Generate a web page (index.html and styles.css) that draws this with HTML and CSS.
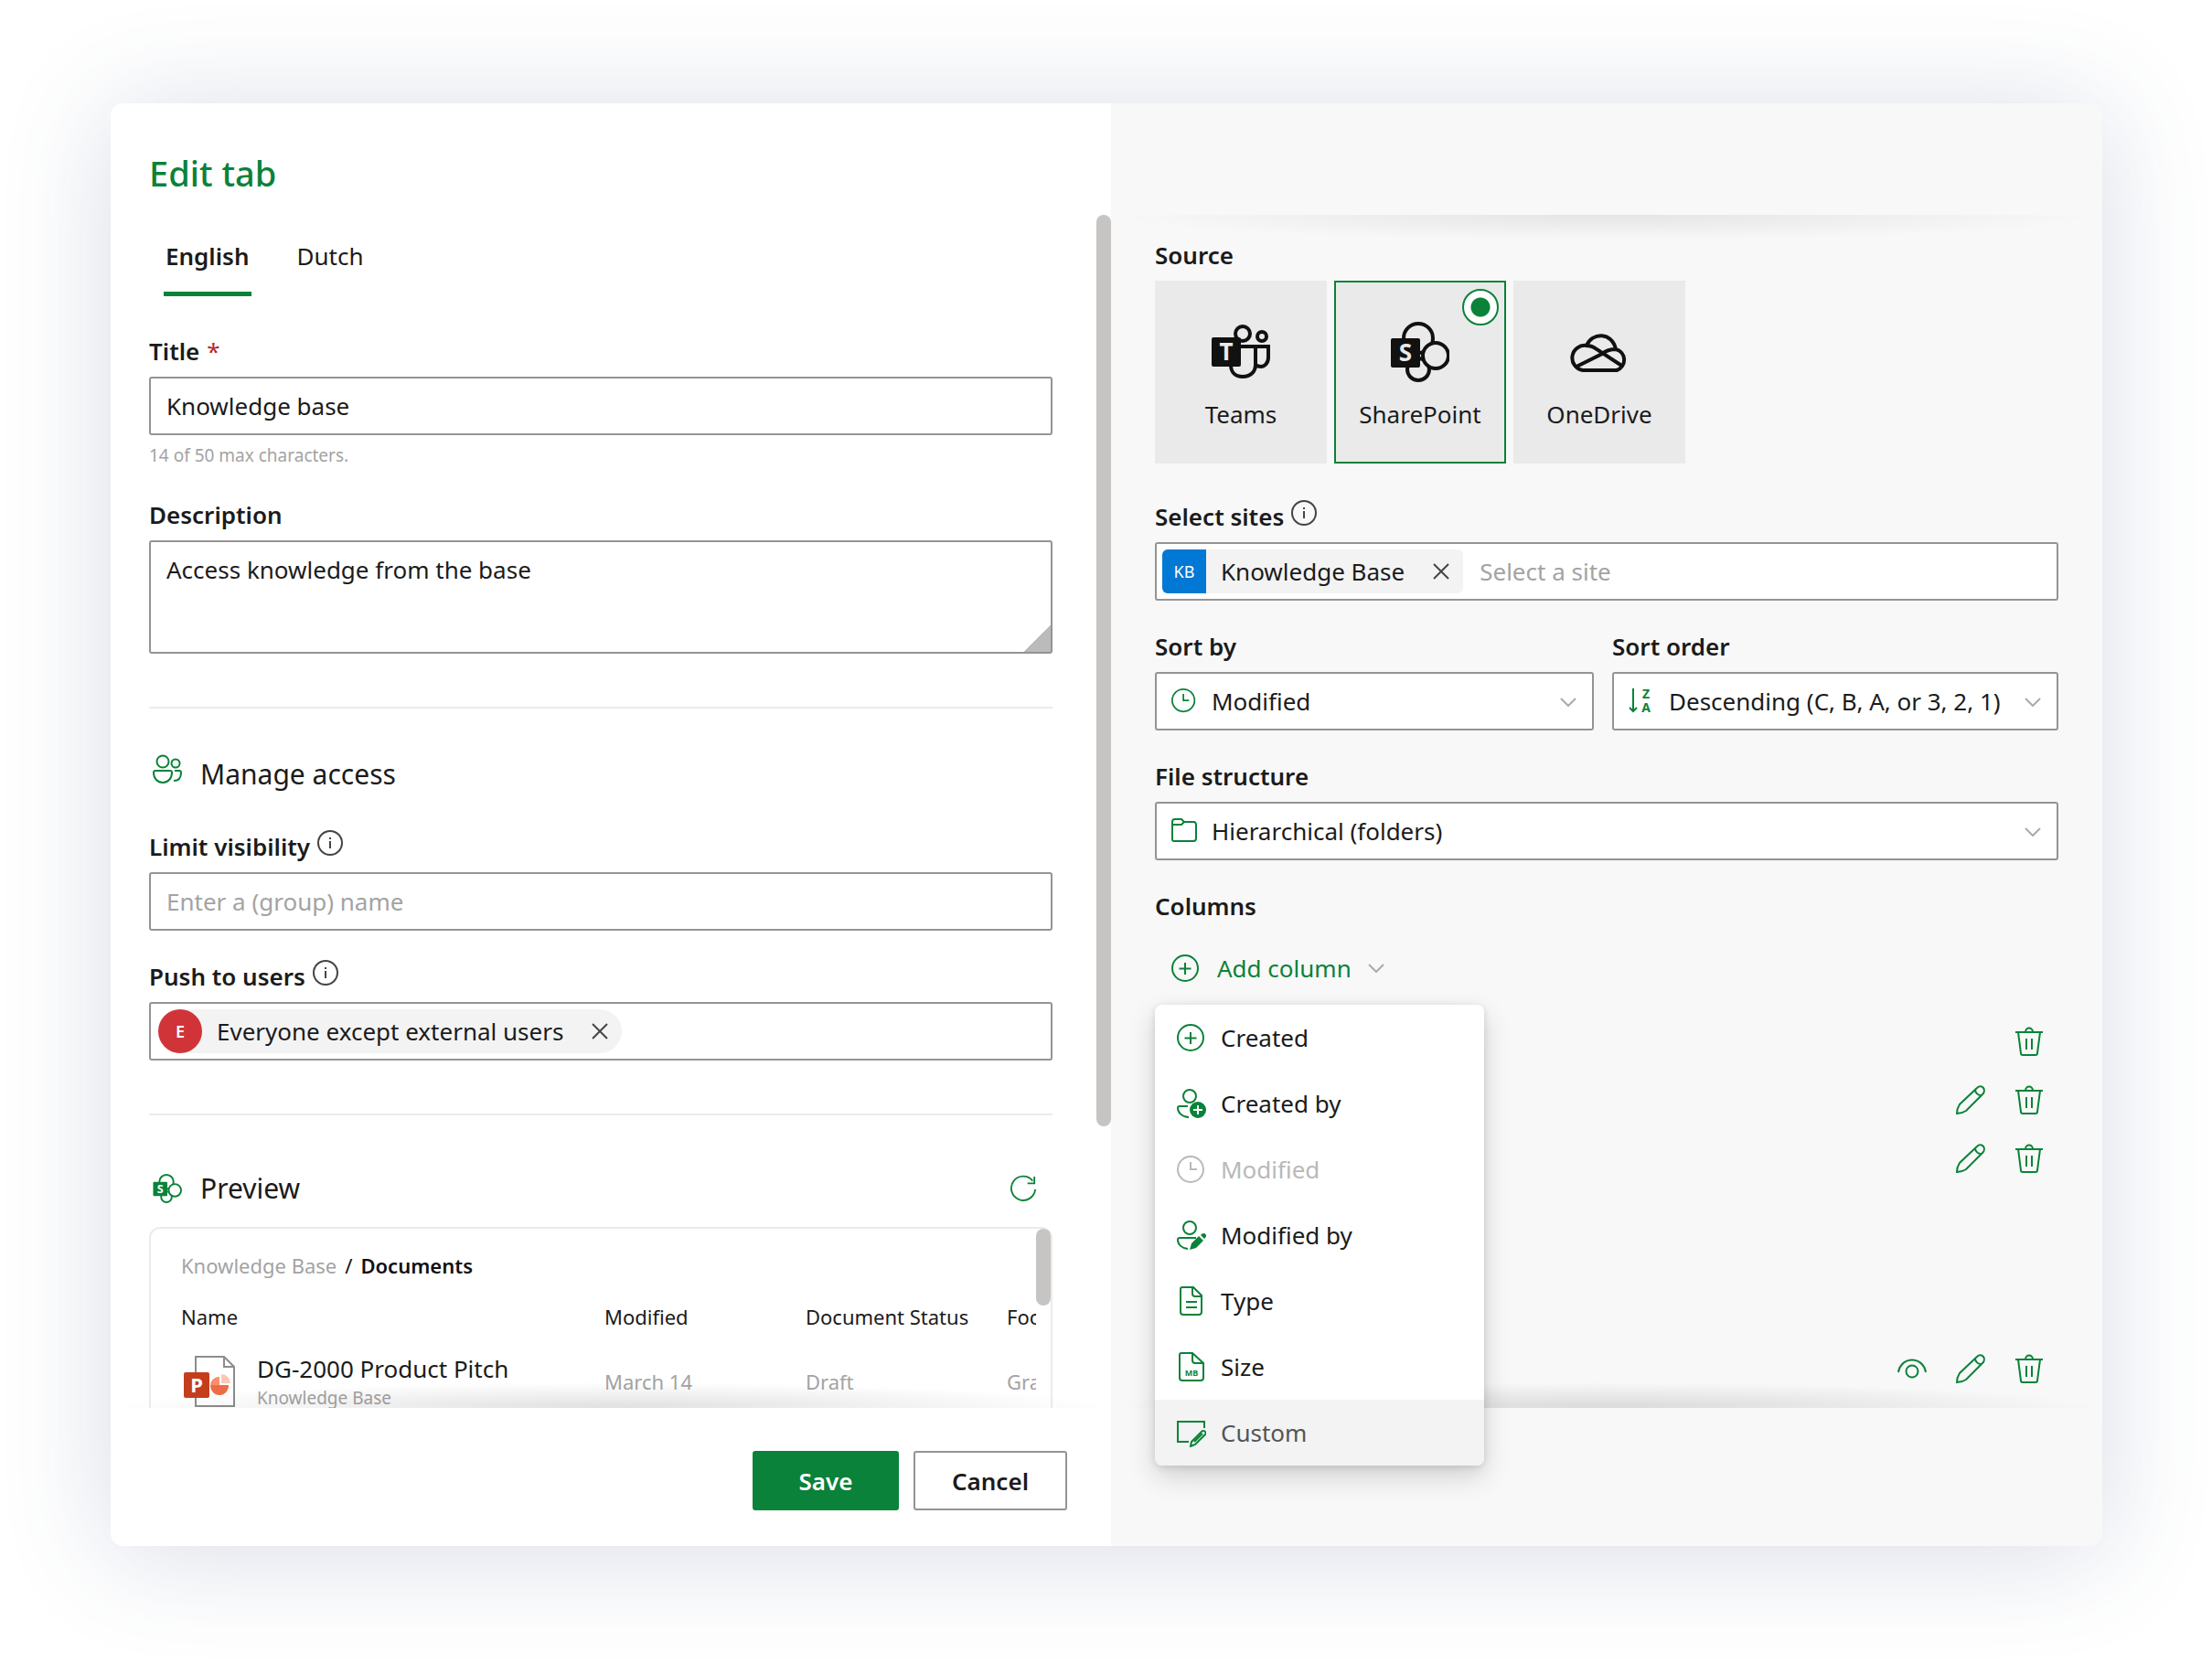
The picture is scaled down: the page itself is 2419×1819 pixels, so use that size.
FILE: index.html
```html
<!DOCTYPE html>
<html lang="en">
<head>
<meta charset="utf-8">
<meta name="viewport" content="width=device-width, initial-scale=1">
<title>Edit tab</title>
<link rel="stylesheet" href="styles.css">
</head>
<body>
<svg class="sprite" aria-hidden="true">
  <symbol id="i-info" viewBox="0 0 28 28"><circle cx="14" cy="14" r="13" /><path d="M14 12v8M14 8v2" /></symbol>
  <symbol id="i-close" viewBox="0 0 18 18"><path d="M1 1l16 16M17 1L1 17" /></symbol>
  <symbol id="i-chevron" viewBox="0 0 18 10"><path d="M1 1l8 8 8-8" /></symbol>
  <symbol id="i-plus" viewBox="0 0 32 32"><circle cx="15" cy="16" r="14" /><path d="M15 10v13M8.500 16.500h13" /></symbol>
  <symbol id="i-clock" viewBox="0 0 32 32"><circle cx="15" cy="16" r="14" /><path d="M15 8v8h7" /></symbol>
  <symbol id="i-people" viewBox="0 0 32 32"><circle cx="11" cy="8" r="6.500" /><circle cx="25" cy="10" r="4.500" /><path d="M3 18h16a2 2 0 0 1 2 2c0 6-4 11-10 11S1 26 1 20a2 2 0 0 1 2-2zM24 18h5a2 2 0 0 1 2 2c0 6-3 9-8 9" /></symbol>
  <symbol id="i-user-add" viewBox="0 0 32 32"><circle cx="14" cy="8" r="7" /><path d="M12 19H3a2 2 0 0 0-2 2c0 5 5 10 12 10" /><circle class="solid" cx="23" cy="23" r="9" /><path class="knock" d="M23 18v10M18 23h10" /></symbol>
  <symbol id="i-user-edit" viewBox="0 0 32 32"><circle cx="14" cy="8" r="7" /><path d="M21 19H3a2 2 0 0 0-2 2c0 5 4 9 11 10" /><path class="solid" d="M24 17l5 5-8 8-7 2 2-7zM27 15c3-3 7 1 4 4l-1 1-4-4z" /></symbol>
  <symbol id="i-doc" viewBox="0 0 32 32"><path d="M6 1h12l9 9v18a3 3 0 0 1-3 3H7a3 3 0 0 1-3-3V3a2 2 0 0 1 2-2zM17 1v7a3 3 0 0 0 3 3h7M10 17h12M10 23h12" /></symbol>
  <symbol id="i-size" viewBox="0 0 32 32"><path d="M5 1h12l12 11v16a3 3 0 0 1-3 3H6a3 3 0 0 1-3-3V3a2 2 0 0 1 2-2zM17 1v8a3 3 0 0 0 3 3h9" /><text x="16" y="26" font-size="9">MB</text></symbol>
  <symbol id="i-custom" viewBox="0 0 32 32"><path d="M30 11V4H1v22h12M29 14a2.500 2.500 0 0 1 2 4L20 29l-5 2 1-5 11-11a2 2 0 0 1 2-1zM19 26l9-9" /></symbol>
  <symbol id="i-trash" viewBox="0 0 32 32"><path d="M1 6h30M12 6c0-6 8-6 8 0M4 6l3 23a2 2 0 0 0 2 2h14a2 2 0 0 0 2-2l3-23M13 13v12M19 13v12" /></symbol>
  <symbol id="i-pencil" viewBox="0 0 32 32"><path d="M23 3c5-5 11 2 6 7L11 28c-3 2-6 3-10 3 0-4 1-7 3-10zM21 5c0 3 3 6 6 6" /></symbol>
  <symbol id="i-eye" viewBox="0 0 32 32"><path d="M1 20C4 2 28 2 31 20" /><circle cx="16" cy="19" r="6.500" /></symbol>
  <symbol id="i-refresh" viewBox="0 0 32 32"><path d="M30 17A14 14 0 1 1 27 7M29 2v8h-8" /></symbol>
  <symbol id="i-folder" viewBox="0 0 28 28"><path d="M1 5a3 3 0 0 1 3-3h7l3 3h11a3 3 0 0 1 2 3v15a3 3 0 0 1-3 3H3a2 2 0 0 1-2-2zM1 8h10l3-3" /></symbol>
  <symbol id="i-sort" viewBox="0 0 28 28"><path d="M5 1v25M1 22l4 4 4-4" /><text x="19" y="12" font-size="14">Z</text><text x="19" y="27" font-size="14">A</text></symbol>
  <symbol id="i-teams" viewBox="0 0 64 64"><circle cx="34" cy="12" r="8" /><circle cx="55" cy="15" r="5" /><path d="M30 26h32v12c0 6-4 10-8 10-3 0-5-1-6-2M48 26v20c0 8-6 13-14 13s-13-5-13-13" /><rect class="solid box" x="0" y="16" width="32" height="32" rx="2" /><text class="mark" x="16" y="41" font-size="26">T</text></symbol>
  <symbol id="i-sharepoint" viewBox="0 0 64 66"><circle cx="30" cy="52" r="12" /><circle cx="30" cy="18" r="16" /><circle cx="49" cy="37" r="14" /><rect class="solid box" x="0" y="18" width="32" height="32" rx="2" /><text class="mark" x="16" y="43" font-size="26">S</text></symbol>
  <symbol id="i-onedrive" viewBox="0 0 64 64"><path d="M14 52a13 13 0 1 1 4-27C24 10 46 10 50 29a12 12 0 0 1 1 23zM18 25q6 0 11 4l29 19M7 48l28-14q6-5 15-5" /></symbol>
  <symbol id="i-ppt" viewBox="0 0 56 56"><path class="page" d="M13 1h31l11 11v43H13zM44 1v11h11" /><rect x="0" y="18" width="28" height="28" rx="2" fill="#c43e1c" /><path d="M39 23a10 10 0 1 0 10 9H39z" fill="#ed6c47" /><path d="M39 23a10 10 0 0 0-9 9h9z" fill="#ff8f6b" /><path d="M41 20a10 10 0 0 1 10 10H41z" fill="#ffc7b5" /><text class="mark" x="14" y="40" font-size="22">P</text></symbol>
</svg>

<main class="dialog">
  <section class="panel">
    <header class="panel-head"><h1>Edit tab</h1></header>

    <div class="panel-body clipped">
      <div class="tabs" role="tablist">
        <button class="tab active" role="tab" aria-selected="true">English</button>
        <button class="tab" role="tab" aria-selected="false">Dutch</button>
      </div>

      <div class="field">
        <label class="label" for="title">Title <span class="required">*</span></label>
        <input class="control" id="title" type="text" value="Knowledge base">
        <p class="help">14 of 50 max characters.</p>
      </div>

      <div class="field">
        <label class="label" for="description">Description</label>
        <textarea class="control area" id="description">Access knowledge from the base</textarea>
      </div>

      <hr>

      <h2 class="section-title"><svg class="icon"><use href="#i-people" /></svg>Manage access</h2>

      <div class="field">
        <label class="label" for="visibility">Limit visibility <svg class="icon info"><use href="#i-info" /></svg></label>
        <input class="control" id="visibility" type="text" placeholder="Enter a (group) name">
      </div>

      <div class="field">
        <label class="label" for="push">Push to users <svg class="icon info"><use href="#i-info" /></svg></label>
        <div class="control picker">
          <span class="chip person"><span class="avatar">E</span>Everyone except external users<button class="remove" aria-label="Remove"><svg class="icon close"><use href="#i-close" /></svg></button></span>
          <input class="bare" id="push" type="text">
        </div>
      </div>

      <hr>

      <div class="preview-head">
        <h2 class="section-title"><svg class="icon"><use href="#i-sharepoint" /></svg>Preview</h2>
        <button class="icon-button" aria-label="Refresh"><svg class="icon small"><use href="#i-refresh" /></svg></button>
      </div>

      <div class="preview">
        <div class="preview-scroll">
          <nav class="crumbs"><a href="#">Knowledge Base</a><span>/</span><strong>Documents</strong></nav>
          <table class="files">
            <colgroup><col class="col-name"><col><col><col></colgroup>
            <thead><tr><th>Name</th><th>Modified</th><th>Document Status</th><th>Footer</th></tr></thead>
            <tbody>
              <tr>
                <td><div class="file"><svg class="file-icon"><use href="#i-ppt" /></svg><div><div class="file-name">DG-2000 Product Pitch</div><div class="file-site">Knowledge Base</div></div></div></td>
                <td>March 14</td><td>Draft</td><td>Grand</td>
              </tr>
            </tbody>
          </table>
        </div>
      </div>
    </div>

    <footer class="panel-foot">
      <button class="button primary">Save</button>
      <button class="button">Cancel</button>
    </footer>
  </section>

  <section class="panel source">
    <div class="panel-head"></div>

    <div class="panel-body">
      <fieldset class="tiles-field">
        <legend class="label">Source</legend>
        <div class="tiles">
          <label class="tile"><input type="radio" name="source"><svg class="tile-icon"><use href="#i-teams" /></svg>Teams</label>
          <label class="tile"><input type="radio" name="source" checked><svg class="tile-icon"><use href="#i-sharepoint" /></svg>SharePoint</label>
          <label class="tile"><input type="radio" name="source"><svg class="tile-icon"><use href="#i-onedrive" /></svg>OneDrive</label>
        </div>
      </fieldset>

      <div class="field">
        <label class="label" for="sites">Select sites <svg class="icon info"><use href="#i-info" /></svg></label>
        <div class="control picker">
          <span class="chip"><span class="avatar">KB</span>Knowledge Base<button class="remove" aria-label="Remove"><svg class="icon close"><use href="#i-close" /></svg></button></span>
          <input class="bare" id="sites" type="text" placeholder="Select a site">
        </div>
      </div>

      <div class="sort-row">
        <div class="field">
          <label class="label" for="sort-by">Sort by</label>
          <div class="select"><svg class="icon lead"><use href="#i-clock" /></svg><select class="control" id="sort-by"><option>Modified</option></select><svg class="icon chevron"><use href="#i-chevron" /></svg></div>
        </div>
        <div class="field">
          <label class="label" for="sort-order">Sort order</label>
          <div class="select"><svg class="icon lead"><use href="#i-sort" /></svg><select class="control" id="sort-order"><option>Descending (C, B, A, or 3, 2, 1)</option></select><svg class="icon chevron"><use href="#i-chevron" /></svg></div>
        </div>
      </div>

      <div class="field">
        <label class="label" for="structure">File structure</label>
        <div class="select"><svg class="icon lead"><use href="#i-folder" /></svg><select class="control" id="structure"><option>Hierarchical (folders)</option></select><svg class="icon chevron"><use href="#i-chevron" /></svg></div>
      </div>

      <h3 class="label columns-title">Columns</h3>
      <div class="add">
        <button class="add-button" aria-expanded="true"><svg class="icon"><use href="#i-plus" /></svg>Add column<svg class="icon chevron-inline"><use href="#i-chevron" /></svg></button>
        <div class="menu" role="menu">
          <button role="menuitem"><svg class="icon"><use href="#i-plus" /></svg>Created</button>
          <button role="menuitem"><svg class="icon"><use href="#i-user-add" /></svg>Created by</button>
          <button role="menuitem" disabled><svg class="icon"><use href="#i-clock" /></svg>Modified</button>
          <button role="menuitem"><svg class="icon"><use href="#i-user-edit" /></svg>Modified by</button>
          <button role="menuitem"><svg class="icon"><use href="#i-doc" /></svg>Type</button>
          <button role="menuitem"><svg class="icon"><use href="#i-size" /></svg>Size</button>
          <button role="menuitem" class="current"><svg class="icon"><use href="#i-custom" /></svg>Custom</button>
        </div>
      </div>

      <div class="column-rows">
        <div class="actions"><button class="icon-button" aria-label="Delete"><svg class="icon"><use href="#i-trash" /></svg></button></div>
        <div class="actions"><button class="icon-button" aria-label="Edit"><svg class="icon"><use href="#i-pencil" /></svg></button><button class="icon-button" aria-label="Delete"><svg class="icon"><use href="#i-trash" /></svg></button></div>
        <div class="actions"><button class="icon-button" aria-label="Edit"><svg class="icon"><use href="#i-pencil" /></svg></button><button class="icon-button" aria-label="Delete"><svg class="icon"><use href="#i-trash" /></svg></button></div>
      </div>
      <div class="column-rows filters">
        <div class="actions"><button class="icon-button" aria-label="Show"><svg class="icon"><use href="#i-eye" /></svg></button><button class="icon-button" aria-label="Edit"><svg class="icon"><use href="#i-pencil" /></svg></button><button class="icon-button" aria-label="Delete"><svg class="icon"><use href="#i-trash" /></svg></button></div>
      </div>
    </div>

    <div class="panel-foot"></div>
  </section>
</main>
</body>
</html>
```

FILE: styles.css
```css
:root {
  --green: #0a8239;
  --ink: #1b1b1b;
  --muted: #a3a3a3;
  --line: #ebebeb;
  --border: #949494;
  --surface: #fff;
}

*, *::before, *::after { box-sizing: border-box; }

body {
  margin: 0;
  padding: 113px 120px 128px 121px;
  min-height: 100vh;
  background: #fff;
  color: var(--ink);
  font: 26px/36px "Noto Sans", "Open Sans", sans-serif;
}

h1, h2, h3, p { margin: 0; font-weight: 400; }
button, input, select, textarea { font: inherit; color: inherit; }
button { border: 0; padding: 0; background: none; }

.sprite { display: none; }

.icon {
  flex: none;
  width: 32px;
  height: 32px;
  fill: none;
  stroke: currentColor;
  stroke-width: 2;
  color: var(--green);
}
.icon.small { width: 30px; height: 30px; }
.icon.info { width: 28px; height: 28px; color: #444; }
.icon.close { width: 18px; height: 18px; color: #444; }

symbol text { fill: currentColor; stroke: none; text-anchor: middle; font-weight: 700; }
symbol .mark { fill: var(--surface); }
symbol .solid { fill: currentColor; stroke: none; }
symbol .knock { stroke: #fff; }
symbol .page { fill: #fff; stroke: #8c8c8c; stroke-width: 2; }
#i-sharepoint circle { fill: var(--surface); stroke-width: 4; }

/* Dialog */
.dialog {
  display: grid;
  grid-template-columns: 1094fr 1084fr;
  height: calc(100vh - 241px);
  min-height: 1578px;
  border-radius: 14px;
  background: #fff;
  box-shadow: 0 8px 120px rgba(60, 80, 130, .2);
}
.panel { display: flex; flex-direction: column; min-height: 0; min-width: 0; }
.panel-head { height: 122px; padding: 49px 42px 0; }
.panel-head h1 { font-size: 38px; line-height: 54px; font-weight: 500; color: var(--green); }
.panel-body { position: relative; flex: 1; min-height: 0; padding: 0 64px 0 42px; }
.clipped { overflow: hidden; }
.panel-foot {
  display: flex;
  justify-content: flex-end;
  align-items: flex-start;
  gap: 16px;
  height: 151px;
  padding: 47px 48px 0;
}

/* Scroll shadows at the edges of each body */
.panel-body::after, .source .panel-body::before {
  content: "";
  position: absolute;
  left: 0;
  right: 0;
  height: 28px;
  pointer-events: none;
}
.panel-body::after { bottom: 0; background: radial-gradient(farthest-side at 50% 100%, rgba(0, 0, 0, .12), transparent); }
.source .panel-body::before { top: 0; background: radial-gradient(farthest-side at 50% 0, rgba(0, 0, 0, .08), transparent); }

/* Scroll thumb */
.clipped::before {
  content: "";
  position: absolute;
  top: 0;
  right: 0;
  bottom: 308px;
  width: 16px;
  border-radius: 8px;
  background: #c6c5c3;
}

.tabs { display: flex; gap: 48px; margin-bottom: 42px; padding-left: 16px; }
.tab { padding: 27px 2px 21px; border-bottom: 5px solid transparent; line-height: 36px; }
.tab.active { border-color: var(--green); font-weight: 600; }

.field + .field { margin-top: 32px; }
.label { display: flex; align-items: flex-start; gap: 8px; margin-bottom: 10px; padding: 0; font-size: 26px; line-height: 36px; font-weight: 600; }
.required { color: #b5262c; font-weight: 400; }
.help { margin-top: 10px; padding-bottom: 3px; font-size: 19px; line-height: 24px; color: var(--muted); }

.control {
  display: block;
  width: 100%;
  height: 64px;
  padding: 0 17px;
  border: 2px solid var(--border);
  border-radius: 3px;
  background: #fff;
  outline: 0;
}
.area {
  height: 124px;
  padding: 12px 17px;
  resize: none;
  background: linear-gradient(135deg, transparent 50%, #bbb 50%) right bottom / 30px 30px no-repeat #fff;
}
::placeholder { color: var(--muted); opacity: 1; }

hr { margin: 58px 0 50px; border: 0; height: 2px; background: var(--line); }

.section-title { display: flex; align-items: flex-start; gap: 20px; margin-bottom: 39px; padding-left: 4px; font-size: 30px; line-height: 44px; }

.picker { display: flex; align-items: center; gap: 18px; padding: 0 6px; }
.chip { display: flex; align-items: center; height: 48px; border-radius: 6px; background: #f3f3f3; }
.chip .avatar {
  display: grid;
  place-items: center;
  width: 48px;
  height: 48px;
  margin-right: 16px;
  border-radius: 6px 0 0 6px;
  background: #0078d4;
  color: #fff;
  font-size: 18px;
}
.chip.person { margin-left: 2px; border-radius: 24px; }
.chip.person .avatar { border-radius: 50%; background: #d13438; font-weight: 600; }
.remove { display: grid; place-items: center; width: 48px; height: 48px; margin-left: 16px; }
.bare { flex: 1; min-width: 0; border: 0; padding: 0; outline: 0; background: none; }

.preview-head { display: flex; align-items: center; justify-content: space-between; height: 60px; margin-bottom: 12px; }
.preview-head .section-title { align-items: center; margin: 0; }
.icon-button { display: grid; place-items: center; width: 64px; height: 64px; }

.preview { position: relative; height: 500px; padding-right: 16px; border: 2px solid var(--line); border-radius: 12px; }
.preview::after {
  content: "";
  position: absolute;
  top: 0;
  right: 0;
  width: 16px;
  height: 84px;
  border-radius: 8px;
  background: #c6c5c3;
}
.preview-scroll { overflow: hidden; padding: 25px 0 0 33px; font-size: 22px; line-height: 30px; }
.crumbs { display: flex; gap: 9px; margin-bottom: 26px; color: #111; }
.crumbs a { color: var(--muted); text-decoration: none; }
.crumbs strong { font-weight: 600; }
.files { width: 1123px; table-layout: fixed; border-collapse: collapse; color: var(--muted); }
.files col { width: 220px; }
.files .col-name { width: 463px; }
.files th { padding: 0; text-align: left; font-weight: 400; color: var(--ink); }
.files td { padding: 24px 0; white-space: nowrap; }
.file { display: flex; align-items: flex-start; gap: 24px; padding-left: 3px; }
.file-icon { flex: none; width: 56px; height: 56px; margin-top: 4px; fill: none; }
.file-name { font-size: 26px; line-height: 36px; color: var(--ink); }
.file-site { font-size: 19px; line-height: 28px; }

.button { min-width: 168px; height: 65px; border: 2px solid var(--border); border-radius: 3px; background: #fff; font-weight: 600; }
.button.primary { min-width: 160px; border-color: var(--green); background: var(--green); color: #fff; }

/* Source panel */
.source { border-radius: 0 14px 14px 0; background: #f8f8f8; }
.source .panel-body { padding: 26px 48px 0; }
.tiles-field { margin: 0 0 40px; padding: 0; border: 0; }
.tiles { display: flex; gap: 8px; }
.tile {
  --surface: #eaeaea;
  position: relative;
  display: flex;
  flex-direction: column;
  align-items: center;
  width: 188px;
  height: 200px;
  padding: 43px 0 0;
  border: 2px solid var(--surface);
  background: var(--surface);
}
.tile:has(:checked) { border-color: var(--green); }
.tile-icon { width: 64px; height: 66px; margin-bottom: 17px; fill: none; stroke: currentColor; stroke-width: 4; color: #111; }
.tile input {
  position: absolute;
  top: 7px;
  right: 6px;
  width: 40px;
  height: 40px;
  margin: 0;
  appearance: none;
  border: 2px solid var(--green);
  border-radius: 50%;
  background: radial-gradient(circle, var(--green) 10px, #fff 11px);
}
.tile input:not(:checked) { opacity: 0; }

.sort-row { display: grid; grid-template-columns: 480fr 488fr; gap: 20px; margin: 32px 0; }
.sort-row .field + .field { margin-top: 0; }
.select { position: relative; }
.select .control { appearance: none; padding: 0 60px; }
.select .lead { position: absolute; left: 18px; top: 17px; width: 28px; height: 28px; }
.select .chevron { position: absolute; right: 19px; top: 28px; }
.chevron, .chevron-inline { width: 18px; height: 10px; color: #aaa; }

.columns-title { margin: 32px 0 20px; }
.add { position: relative; z-index: 2; }
.add-button { display: flex; align-items: center; gap: 18px; height: 60px; padding-left: 18px; color: var(--green); }
.menu {
  position: absolute;
  top: 70px;
  left: 0;
  width: 360px;
  overflow: hidden;
  border-radius: 8px;
  background: #fff;
  box-shadow: 0 12px 30px rgba(0, 0, 0, .16), 0 2px 8px rgba(0, 0, 0, .12);
}
.menu button { display: flex; align-items: center; gap: 16px; width: 100%; height: 72px; padding-left: 24px; }
.menu button:disabled, .menu button:disabled .icon { color: #b9b9b9; }
.menu .current { background: #f3f3f3; color: #555; }

.column-rows { margin-top: 18px; }
.column-rows.filters { margin-top: 166px; }
.actions { display: flex; justify-content: flex-end; height: 64px; }
```
